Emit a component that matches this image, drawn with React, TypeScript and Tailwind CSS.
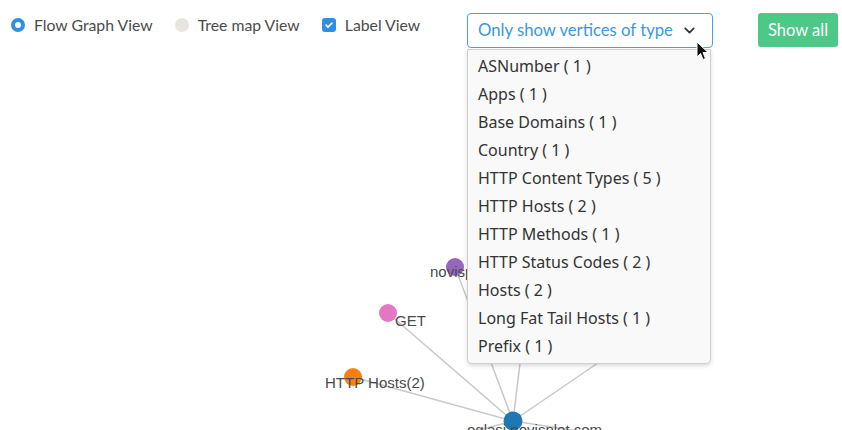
import React from 'react';
import { ChevronDown } from 'lucide-react';

// --- DATA ---
const vertexTypes = [
  { name: 'ASNumber', count: 1 },
  { name: 'Apps', count: 1 },
  { name: 'Base Domains', count: 1 },
  { name: 'Country', count: 1 },
  { name: 'HTTP Content Types', count: 5 },
  { name: 'HTTP Hosts', count: 2 },
  { name: 'HTTP Methods', count: 1 },
  { name: 'HTTP Status Codes', count: 2 },
  { name: 'Hosts', count: 2 },
  { name: 'Long Fat Tail Hosts', count: 1 },
  { name: 'Prefix', count: 1 },
];

const center = { x: 513, y: 421 };

const nodes = [
  { id: 'purple', x: 455, y: 267, color: '#9467bd', label: 'novisplet', lx: 430, ly: 277 },
  { id: 'pink', x: 388, y: 313, color: '#e377c2', label: 'GET', lx: 395, ly: 326 },
  { id: 'orange', x: 353, y: 377, color: '#ff7f0e', label: 'HTTP Hosts(2)', lx: 325, ly: 388 },
];

// edges to nodes hidden behind the dropdown / off canvas
const hiddenEdges = [
  { x: 535, y: 240 },
  { x: 690, y: 300 },
  { x: 330, y: 470 },
  { x: 700, y: 450 },
];

const ui = '"Lato", "Noto Sans", sans-serif';
const menuFont = '"Noto Sans", "Open Sans", sans-serif';

// --- ICONS ---
const CheckIcon = () => (
  <svg width="10" height="10" viewBox="0 0 24 24" fill="none" stroke="white" strokeWidth="4" strokeLinecap="round" strokeLinejoin="round">
    <path d="M5 12.5l4.5 4.5L19 7.5" />
  </svg>
);

const Cursor = () => (
  <svg width="14" height="20" viewBox="0 0 14 20">
    <path d="M1 1 L1 16 L4.5 12.5 L7 18.5 L9.5 17.5 L7 11.5 L12 11.5 Z" fill="#111" stroke="#fff" strokeWidth="1" strokeLinejoin="round" />
  </svg>
);

export default function App() {
  return (
    <div className="relative w-[842px] h-[430px] overflow-hidden bg-white flex flex-col">
      {/* --- TOOLBAR --- */}
      <div className="flex items-start h-[60px] pt-[13px] pl-[11px] shrink-0">
        <div
          className="flex items-center h-[24px] text-[15.8px] text-[#4b4b4b] whitespace-nowrap shrink-0"
          style={{ fontFamily: ui }}
        >
          <span className="shrink-0 w-[14px] h-[14px] rounded-full border-[4px] border-[#2f8fe6] bg-white" />
          <span className="ml-[9px]">Flow Graph View</span>
          <span className="shrink-0 ml-[22px] w-[14px] h-[14px] rounded-full bg-[#e8e5e1]" />
          <span className="ml-[9px]">Tree map View</span>
          <span className="shrink-0 ml-[22px] w-[14px] h-[14px] rounded-[3px] bg-[#2f8fe6] flex items-center justify-center">
            <CheckIcon />
          </span>
          <span className="ml-[9px]">Label View</span>
        </div>

        <div
          className="ml-auto mr-[4px] shrink-0 flex items-center justify-between w-[246px] h-[35px] pl-[10px] pr-[8px] border border-[#4a9fea] rounded-[4px] text-[16.7px] text-[#3a97e6] whitespace-nowrap"
          style={{ fontFamily: ui }}
        >
          <span>Only show vertices of type</span>
          <ChevronDown size={17} strokeWidth={2.4} className="text-[#333] mr-[6px]" />
        </div>

        <button
          className="ml-[41px] mr-[4px] shrink-0 w-[80px] h-[34px] rounded-[3px] bg-[#4cc987] text-white text-[16.5px]"
          style={{ fontFamily: ui }}
        >
          Show all
        </button>
      </div>

      {/* --- GRAPH --- */}
      <svg width="842" height="370" viewBox="0 60 842 370" className="shrink-0">
        <g stroke="#c8c8c8" strokeWidth="1.5">
          {nodes.map((n) => (
            <line key={n.id} x1={center.x} y1={center.y} x2={n.x} y2={n.y} />
          ))}
          {hiddenEdges.map((e, i) => (
            <line key={i} x1={center.x} y1={center.y} x2={e.x} y2={e.y} />
          ))}
        </g>
        {nodes.map((n) => (
          <circle key={n.id} cx={n.x} cy={n.y} r="9" fill={n.color} />
        ))}
        <circle cx={center.x} cy={center.y} r="9.5" fill="#1f77b4" />
        <g fontFamily='"Liberation Sans", Arial, sans-serif' fontSize="15" fill="#4a4a4a">
          {nodes.map((n) => (
            <text key={n.id} x={n.lx} y={n.ly}>
              {n.label}
            </text>
          ))}
          <text x="467" y="435">oglasi.novisplet.com</text>
        </g>
      </svg>

      {/* --- DROPDOWN MENU --- */}
      <div
        className="absolute left-[467px] top-[49px] w-[244px] pt-[2px] pb-[3px] bg-[#f9f9f9] border border-[#cfcfcf] rounded-b-[5px] shadow-[0_2px_4px_rgba(0,0,0,0.15)]"
        style={{ fontFamily: menuFont }}
      >
        {vertexTypes.map((t) => (
          <div key={t.name} className="h-[28px] flex items-center pl-[10px] text-[16px] text-[#333]">
            {t.name} ( {t.count} )
          </div>
        ))}
      </div>

      <div className="absolute left-[696px] top-[41px]">
        <Cursor />
      </div>
    </div>
  );
}
